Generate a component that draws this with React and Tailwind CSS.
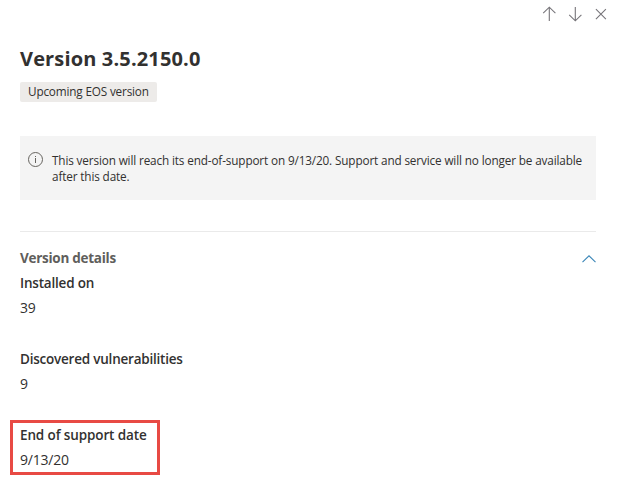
function HeaderIcons() {
  const stroke = { fill: 'none', stroke: '#77757a', strokeWidth: 1.1 };
  return (
    <header className="flex h-7 items-center justify-end gap-3 pr-3">
      <svg width="14" height="16" viewBox="0 0 14 16" {...stroke}>
        <path d="M7.3 15V1.3M1.2 7.1l6.1-5.9 6.1 5.9" />
      </svg>
      <svg width="14" height="16" viewBox="0 0 14 16" {...stroke}>
        <path d="M7.3 1v13.7M1.2 8.9l6.1 5.9 6.1-5.9" />
      </svg>
      <svg width="14" height="16" viewBox="0 0 14 16" {...stroke}>
        <path d="M1.9 3.2l10 10M11.9 3.2l-10 10" />
      </svg>
    </header>
  );
}

function Field({ label, value, labelClass }) {
  return (
    <div className="flex flex-col leading-[25px]">
      <dt className={`h-[25px] self-start pt-px whitespace-nowrap text-[13.5px] font-semibold ${labelClass}`}>{label}</dt>
      <dd className="self-start whitespace-nowrap text-[14px] tracking-[-0.2px]">{value}</dd>
    </div>
  );
}

export default function App() {
  return (
    <main className="h-[491px] w-[620px] overflow-hidden bg-white font-['Open_Sans','Noto_Sans',sans-serif] text-[#323130]">
      <HeaderIcons />
      <div className="pl-5 pr-6">
        <h1 className="mt-[17px] w-fit whitespace-nowrap text-[20px] leading-[28px] font-bold tracking-[0.15px]">Version 3.5.2150.0</h1>
        <div className="mt-[9px] flex h-5 w-[137px] items-center rounded-[2px] bg-[#edebe9] pl-2 text-[11.75px]">
          <span className="whitespace-nowrap tracking-[-0.17px]">Upcoming EOS version</span>
        </div>
        <div className="mt-[34px] flex h-16 bg-[#f4f4f4] pt-4 pl-2">
          <svg className="shrink-0" width="16" height="16" viewBox="0 0 16 16" fill="none" stroke="#66645f" strokeWidth="1">
            <circle cx="7.5" cy="7.5" r="7" />
            <path d="M7.5 6v5M7.5 4v1" />
          </svg>
          <p className="ml-2 whitespace-nowrap text-[11.75px] leading-4 tracking-[-0.14px]">
            <span>This version will reach its end-of-support on 9/13/20. Support and service will no longer be available</span>
            <br />
            <span>after this date.</span>
          </p>
        </div>
        <section className="mt-[31px] border-t border-[#eaeaea] pt-[13px]">
          <div className="flex h-[25px] items-center justify-between">
            <h2 className="mt-[2px] whitespace-nowrap text-[13.5px] font-bold tracking-[-0.27px] text-[#605e5c]">Version details</h2>
            <svg className="mt-[2px]" width="14" height="8" viewBox="0 0 14 8" fill="none" stroke="#3c87b8" strokeWidth="1.1">
              <path d="M.5 7.2L7 .8l6.5 6.4" />
            </svg>
          </div>
          <dl>
            <Field label="Installed on" value="39" labelClass="tracking-[-0.2px]" />
            <div className="mt-[26px]">
              <Field label="Discovered vulnerabilities" value="9" labelClass="tracking-[-0.22px]" />
            </div>
            <div className="mt-[24px] -ml-[10px] h-[55px] w-[150px] border-[3px] border-[#e84a44] pl-[7px]">
              <div className="-mt-px">
                <Field label="End of support date" value="9/13/20" labelClass="tracking-[-0.12px]" />
              </div>
            </div>
          </dl>
        </section>
      </div>
    </main>
  );
}
